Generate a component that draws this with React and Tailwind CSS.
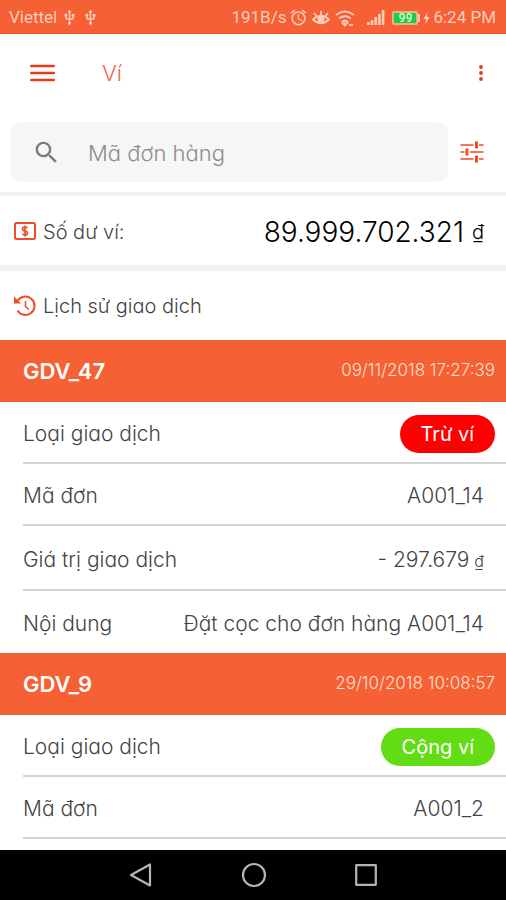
import { MdAlarm, MdSearch, MdUsb } from "react-icons/md";

const transactions = [
  {
    id: "GDV_47",
    time: "09/11/2018 17:27:39",
    kind: "Trừ ví",
    badge: "bg-[#ff0000]",
    rows: [
      { label: "Mã đơn", value: "A001_14" },
      { label: "Giá trị giao dịch", value: "- 297.679", unit: "₫", height: "h-[65px]" },
      { label: "Nội dung", value: "Đặt cọc cho đơn hàng A001_14" },
    ],
  },
  {
    id: "GDV_9",
    time: "29/10/2018 10:08:57",
    kind: "Cộng ví",
    badge: "bg-[#62dd15]",
    rows: [{ label: "Mã đơn", value: "A001_2" }],
    partial: true,
  },
];

function StatusBar() {
  return (
    <div className="flex h-[34px] shrink-0 items-center justify-between border-b border-[#ee4a14] bg-[#f56035] pt-[2px] pr-[10px] pl-[9px] font-['Roboto','Noto_Sans',sans-serif] text-[17px] text-[#ffcdba]">
      <div className="flex items-center gap-1">
        <span>Viettel</span>
        <MdUsb size={17} />
        <MdUsb size={17} />
      </div>
      <div className="flex items-center gap-[3px]">
        <span>191B/s</span>
        <MdAlarm size={19} />
        <svg width="20" height="18" viewBox="0 0 20 18" fill="none" stroke="currentColor" strokeWidth="1.8">
          <path d="M2 10.5Q10 3 18 10.5Q10 18 2 10.5Z" />
          <circle cx="10" cy="10" r="2.6" fill="currentColor" />
          <path d="M10 6V2M5.5 7L3 4M14.500 7L17 4" />
        </svg>
        <svg width="22" height="18" viewBox="0 0 22 18" fill="none" stroke="currentColor" strokeWidth="1.8">
          <path d="M2 6Q11 -1 20 6M5 9.500Q11 5 17 9.500M8 13Q11 10.500 14 13" />
          <path d="M9 14.500L11 16.500L13 14.500Z" fill="currentColor" />
          <path d="M15 16h4" />
        </svg>
        <svg className="ml-2" width="18" height="17" viewBox="0 0 18 17" fill="currentColor">
          <path d="M0 13h2.600v3H0zM3.700 11h2.600v5H3.700zM7.400 8h2.600v8H7.400zM11.100 5h2.600v11h-2.600zM14.800 1h2.600v15h-2.600z" />
        </svg>
        <div className="ml-1 flex items-center">
          <span className="flex h-[14px] w-[26px] items-center justify-center rounded-[2px] border-2 border-[#f3ad85] bg-[#16cf4c] text-[12px] leading-none font-medium text-[#d9ffcf]">
            99
          </span>
          <span className="h-2 w-[2px] bg-[#ffcdba]" />
        </div>
        <svg width="7" height="14" viewBox="0 0 7 14" fill="currentColor">
          <path d="M4.500 1L0.500 8H3L2.500 13L6.500 6H4Z" />
        </svg>
        <span>6:24 PM</span>
      </div>
    </div>
  );
}

function TopBar() {
  return (
    <header className="flex h-[78px] shrink-0 items-center px-[30px]">
      <button aria-label="Menu">
        <svg width="25" height="18" viewBox="0 0 25 18" stroke="#e33c1d" strokeWidth="2.4" strokeLinecap="round">
          <path d="M1.200 2h22.600M1.200 9h22.600M1.200 16h22.600" />
        </svg>
      </button>
      <h1 className="ml-[47px] flex-1 text-[22px] font-light text-[#ec6749]">Ví</h1>
      <button aria-label="Thêm" className="-mr-2">
        <svg width="6" height="18" viewBox="0 0 6 18" fill="#e33c1d">
          <circle cx="3" cy="3" r="1.900" />
          <circle cx="3" cy="9" r="1.900" />
          <circle cx="3" cy="15" r="1.900" />
        </svg>
      </button>
    </header>
  );
}

function SearchBar() {
  return (
    <div className="flex shrink-0 items-center gap-3 p-[10px]">
      <label className="flex h-[60px] min-w-0 flex-1 items-center rounded-[10px] bg-[#f6f6f6] pl-[22px]">
        <MdSearch size={29} color="#7b7b7b" />
        <input
          aria-label="Mã đơn hàng"
          placeholder="Mã đơn hàng"
          className="ml-[27px] min-w-0 flex-1 bg-transparent pt-[3px] text-[22px] font-light text-[#444] outline-none placeholder:text-[#8c8c8c]"
        />
      </label>
      <button aria-label="Bộ lọc" className="mr-3">
        <svg width="24" height="24" viewBox="0 0 24 24" fill="none" stroke="#ed4a28">
          <path d="M0.500 5h13M19 5h4.500M0.500 12h4M10 12h13.500M0.500 19h13M19 19h4.500" strokeWidth="1.5" />
          <path d="M16.500 1.500v7M7 8.500v7M16.500 15.500v7" strokeWidth="3" />
        </svg>
      </button>
    </div>
  );
}

function Balance() {
  return (
    <section className="flex h-[79px] shrink-0 items-center border-t-4 border-b-[6px] border-[#f0f1f2] pr-[22px] pl-[14px]">
      <svg width="22" height="18" viewBox="0 0 22 18" fill="none" stroke="#ed4d29">
        <rect x="1" y="1" width="20" height="16" rx="1.500" strokeWidth="2" />
        <path d="M13.500 6.200Q13 5 11 5Q8.500 5 8.500 7Q8.500 8.700 11 9Q13.500 9.300 13.500 11Q13.500 13 11 13Q9 13 8.500 11.700M11 3.500v11" strokeWidth="1.700" />
      </svg>
      <span className="ml-[7px] pt-[2px] text-[20px] font-light text-[#444]">Số dư ví:</span>
      <span className="ml-auto flex items-center gap-2 pt-[2px] text-[28px] font-light text-black">
        89.999.702.321 <span className="text-[20px]">₫</span>
      </span>
    </section>
  );
}

function Row({ label, height = "h-[62px]", last, children }) {
  return (
    <div className={`ml-[23px] flex items-center justify-between pt-1 ${height} ${last ? "" : "border-b-2 border-[#d3d3d3]"}`}>
      <dt>{label}</dt>
      <dd>{children}</dd>
    </div>
  );
}

function Transaction({ item }) {
  return (
    <article>
      <div className="flex h-[62px] items-center justify-between bg-[#f56035] pr-[11px] pl-[23px]">
        <h3 className="text-[22px] font-semibold text-white">{item.id}</h3>
        <time className="text-[17px] font-light text-[#ffe0d3]">{item.time}</time>
      </div>
      <dl className="text-[21px] font-light text-[#444]">
        <Row label="Loại giao dịch">
          <span className={`mr-[11px] flex h-[38px] items-center rounded-full px-[21px] text-[20px] font-normal text-white ${item.badge}`}>
            {item.kind}
          </span>
        </Row>
        {item.rows.map((row, i) => (
          <Row key={row.label} label={row.label} height={row.height} last={!item.partial && i === item.rows.length - 1}>
            <span className="mr-[22px]">
              {row.value}
              {row.unit && <span className="ml-[5px] text-[16px]">{row.unit}</span>}
            </span>
          </Row>
        ))}
      </dl>
    </article>
  );
}

function NavBar() {
  return (
    <nav className="flex h-[50px] shrink-0 items-center justify-center gap-[88px] bg-black text-[#b5b5b5]">
      <button aria-label="Quay lại">
        <svg width="24" height="26" viewBox="0 0 24 26" fill="none" stroke="currentColor" strokeWidth="2.200" strokeLinejoin="round">
          <path d="M2 13L21 2.500V23.500Z" />
        </svg>
      </button>
      <button aria-label="Trang chủ">
        <svg width="26" height="26" viewBox="0 0 26 26" fill="none" stroke="currentColor" strokeWidth="2.200">
          <circle cx="13" cy="13" r="11" />
        </svg>
      </button>
      <button aria-label="Gần đây">
        <svg width="22" height="22" viewBox="0 0 22 22" fill="none" stroke="currentColor" strokeWidth="2.200" strokeLinejoin="round">
          <rect x="1.200" y="1.200" width="19.600" height="19.600" />
        </svg>
      </button>
    </nav>
  );
}

export default function App() {
  return (
    <div className="flex h-screen flex-col overflow-hidden bg-white font-['Inter','Noto_Sans',sans-serif] [font-feature-settings:'cv11']">
      <StatusBar />
      <TopBar />
      <SearchBar />
      <Balance />
      <main className="min-h-0 flex-1 overflow-hidden">
        <h2 className="flex h-[69px] items-center gap-[6px] pl-[13px] text-[20px] font-light text-[#444]">
          <svg width="24" height="24" viewBox="0 0 24 24" fill="none" stroke="#ed4d29" strokeWidth="2">
            <path d="M4.500 7A9.200 9.200 0 1 1 4.500 16.500" />
            <path d="M1 2.500V9.500H8Z" fill="#ed4d29" stroke="none" />
            <path d="M12.500 7v5.500l3.500 3" strokeWidth="1.600" />
          </svg>
          Lịch sử giao dịch
        </h2>
        {transactions.map((item) => (
          <Transaction key={item.id} item={item} />
        ))}
      </main>
      <NavBar />
    </div>
  );
}
